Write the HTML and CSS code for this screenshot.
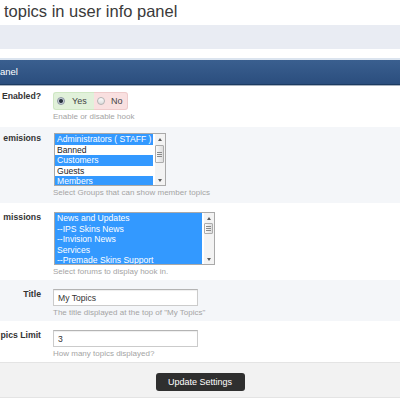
FILE: index.html
```html
<!DOCTYPE html>
<html lang="en">
<head>
    <meta charset="UTF-8">
    <meta name="viewport" content="width=device-width, initial-scale=1.0">
    <title>topics in user info panel</title>
    <link rel="stylesheet" href="styles.css">
</head>
<body>
    <h1 class="page-title">topics in user info panel</h1>
    <div class="subnav"></div>

    <form class="panel">
        <h2 class="panel-head">anel</h2>

        <!-- Hook on / off -->
        <div class="row row-tight">
            <div class="label">Enabled?</div>
            <div class="field">
                <div class="toggle">
                    <label class="toggle-yes"><span class="radio checked"></span>Yes</label>
                    <label class="toggle-no"><span class="radio"></span>No</label>
                </div>
                <div class="help">Enable or disable hook</div>
            </div>
        </div>

        <!-- Groups -->
        <div class="row row-tight row-alt">
            <div class="label">emisions</div>
            <div class="field">
                <div class="listbox listbox-small">
                    <ul>
                        <li class="sel">Administrators ( STAFF )</li>
                        <li>Banned</li>
                        <li class="sel">Customers</li>
                        <li>Guests</li>
                        <li class="sel">Members</li>
                    </ul>
                    <div class="scrollbar">
                        <span class="sb-up"></span>
                        <div class="sb-track"><span class="sb-thumb thumb-big"><span class="grip"></span></span></div>
                        <span class="sb-down"></span>
                    </div>
                </div>
                <div class="help">Select Groups that can show member topics</div>
            </div>
        </div>

        <!-- Forums -->
        <div class="row">
            <div class="label">missions</div>
            <div class="field">
                <div class="listbox listbox-wide">
                    <ul>
                        <li class="sel">News and Updates</li>
                        <li class="sel">--IPS Skins News</li>
                        <li class="sel">--Invision News</li>
                        <li class="sel">Services</li>
                        <li class="sel">--Premade Skins Support</li>
                    </ul>
                    <div class="scrollbar">
                        <span class="sb-up"></span>
                        <div class="sb-track"><span class="sb-thumb thumb-small"><span class="grip"></span></span></div>
                        <span class="sb-down"></span>
                    </div>
                </div>
                <div class="help">Select forums to display hook in.</div>
            </div>
        </div>

        <div class="row row-alt">
            <div class="label">Title</div>
            <div class="field">
                <input class="text-input" type="text" value="My Topics">
                <div class="help">The title displayed at the top of "My Topics"</div>
            </div>
        </div>

        <div class="row">
            <div class="label">pics Limit</div>
            <div class="field">
                <input class="text-input" type="text" value="3">
                <div class="help">How many topics displayed?</div>
            </div>
        </div>

        <div class="actions">
            <button type="submit" class="btn">Update Settings</button>
        </div>
    </form>
</body>
</html>
```

FILE: styles.css
```css
body {
    margin: 0;
    font-family: "Liberation Sans", Arial, sans-serif;
    color: #333;
    background: #fff;
}

.page-title {
    margin: 0 0 4px;
    padding: 2px 0 0 4px;
    font-size: 16.5px;
    font-weight: normal;
    line-height: 19px;
    color: #3a3a3a;
}

.subnav {
    height: 24px;
    background: #e9ecf3;
    margin-bottom: 9px;
}

/* panel header */
.panel-head {
    margin: 0;
    height: 24px;
    padding-left: 0;
    border-top: 2px solid #dbe4ef;
    border-bottom: 1px solid #1c3a60;
    box-shadow: 0 1px 0 #a9b3c0;
    background: linear-gradient(#3a5f8f, #2b4e7e);
    color: #fff;
    font-size: 9.5px;
    font-weight: normal;
    line-height: 24px;
}

/* form rows */
.row {
    display: flex;
    align-items: flex-start;
    padding: 9px 0 3px;
}
.row-tight {
    padding: 6px 0 5px;
}
.row-alt {
    background: #f4f6f9;
}

.label {
    flex: none;
    width: 41px;
    text-align: right;
    white-space: nowrap;
    font-size: 8.7px;
    font-weight: bold;
    line-height: 11px;
    color: #333;
}

.field {
    margin-left: 12px;
}

.help {
    margin-top: 1px;
    font-size: 8px;
    line-height: 11px;
    color: #a4a4a4;
    white-space: nowrap;
}

/* yes / no switch */
.toggle {
    display: inline-flex;
    height: 18px;
    font-size: 9px;
    color: #444;
}
.toggle-yes,
.toggle-no {
    display: flex;
    align-items: center;
    box-sizing: border-box;
    height: 18px;
}
.toggle-yes {
    width: 41px;
    padding-left: 3px;
    background: #e1f1da;
    border: 1px solid #cfe7c4;
    border-right: none;
    border-radius: 3px 0 0 3px;
}
.toggle-no {
    width: 34px;
    padding-left: 3px;
    background: #f9e0e0;
    border: 1px solid #eecbcb;
    border-left: none;
    border-radius: 0 3px 3px 0;
}
.radio {
    width: 8px;
    height: 8px;
    box-sizing: border-box;
    margin-right: 6px;
    border: 1px solid #b3b3b3;
    border-radius: 50%;
    background: linear-gradient(#fdfdfd, #dcdcdc);
}
.toggle-yes .radio {
    margin-right: 7px;
}
.radio.checked {
    border-color: #8c96a2;
    background: radial-gradient(circle, #27313d 0, #27313d 1.5px, #c9d1da 2.5px);
}

/* multi select boxes */
.listbox {
    display: flex;
    box-sizing: border-box;
    height: 53px;
    margin-left: 1px;
    border: 1px solid #a9a9a9;
    background: #fff;
}
.listbox-small {
    width: 112px;
}
.listbox-wide {
    width: 161px;
}
.listbox ul {
    flex: 1;
    margin: 0;
    padding: 0;
    list-style: none;
    overflow: hidden;
}
.listbox li {
    height: 10.5px;
    padding-left: 2px;
    font-size: 8.6px;
    line-height: 10.5px;
    white-space: nowrap;
    color: #222;
}
.listbox li.sel {
    background: #3399ff;
    color: #fff;
}

.scrollbar {
    display: flex;
    flex-direction: column;
    width: 10px;
    margin-left: 2px;
    background: #f3f3f3;
}
.sb-up,
.sb-down {
    display: flex;
    align-items: center;
    justify-content: center;
    height: 10px;
}
.sb-up::before,
.sb-down::before {
    content: "";
    border-left: 2px solid transparent;
    border-right: 2px solid transparent;
}
.sb-up::before {
    border-bottom: 3px solid #5a5a5a;
}
.sb-down::before {
    border-top: 3px solid #5a5a5a;
}
.sb-track {
    flex: 1;
}
.sb-thumb {
    display: flex;
    align-items: center;
    justify-content: center;
    box-sizing: border-box;
    width: 9px;
    border: 1px solid #acacac;
    border-radius: 1px;
    background: linear-gradient(to right, #fafafa, #dedede);
}
.thumb-big {
    height: 18px;
    margin-top: 1px;
}
.thumb-small {
    height: 11px;
}
.grip {
    width: 5px;
    height: 5px;
    box-sizing: border-box;
    border-top: 1px solid #8a8a8a;
    border-bottom: 1px solid #8a8a8a;
    background: linear-gradient(#8a8a8a, #8a8a8a) center / 100% 1px no-repeat;
}

/* text fields */
.text-input {
    display: block;
    box-sizing: border-box;
    width: 145px;
    height: 17px;
    margin: 0;
    padding: 0 4px;
    border: 1px solid #cbcbcb;
    border-top-color: #b4b4b4;
    border-radius: 0;
    box-shadow: inset 0 1px 1px rgba(0, 0, 0, 0.07);
    font-family: inherit;
    font-size: 8.6px;
    color: #333;
    background: #fff;
}

/* bottom bar */
.actions {
    padding: 8px 0 6px;
    text-align: center;
    background: #f2f2f2;
    border-top: 1px solid #e4e4e4;
    border-bottom: 1px solid #e4e4e4;
}
.btn {
    display: inline-block;
    width: 89px;
    height: 18px;
    padding: 0;
    border: none;
    border-radius: 3px;
    background: #2f2f2f;
    color: #fff;
    font-family: inherit;
    font-size: 9px;
    cursor: pointer;
}
```
